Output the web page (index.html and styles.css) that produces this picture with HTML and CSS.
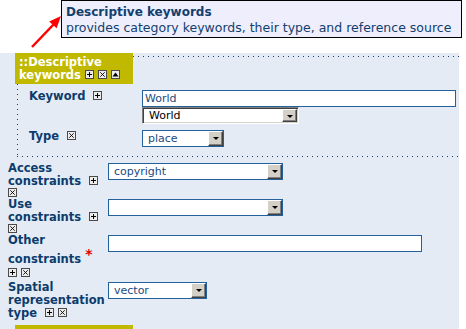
FILE: index.html
```html
<!DOCTYPE html>
<html lang="en">
<head>
    <meta charset="UTF-8">
    <meta name="viewport" content="width=device-width, initial-scale=1.0">
    <title>Metadata editor</title>
    <link rel="stylesheet" href="styles.css">
</head>
<body>
    <svg class="defs" width="0" height="0">
        <symbol id="i-add" viewBox="0 0 9 9">
            <rect x="0.5" y="0.5" width="8" height="8" fill="#ececec" stroke="#4a4a4a"/>
            <path d="M2 4.5h5M4.5 2v5" stroke="#000" stroke-width="1"/>
        </symbol>
        <symbol id="i-del" viewBox="0 0 9 9">
            <rect x="0.5" y="0.5" width="8" height="8" fill="#ececec" stroke="#4a4a4a"/>
            <path d="M2.3 2.3l4.4 4.4M6.7 2.3l-4.4 4.4" stroke="#000" stroke-width="0.9"/>
        </symbol>
        <symbol id="i-up" viewBox="0 0 9 9">
            <rect x="0.5" y="0.5" width="8" height="8" fill="#ececec" stroke="#4a4a4a"/>
            <path d="M1.5 6.5h6L4.5 2.5z" fill="#000"/>
        </symbol>
    </svg>

    <div class="tip">
        <div class="tip-title">Descriptive keywords</div>
        <div class="tip-text">provides category keywords, their type, and reference source</div>
    </div>
    <svg class="arrow" width="36" height="40" viewBox="0 0 36 40">
        <path d="M4 35L25.5 12.5" stroke="#f00" stroke-width="2.5"/>
        <path d="M33 4L28.6 16.3L21.2 9.5z" fill="#f00"/>
    </svg>

    <div class="panel">
        <div class="sect">
            <div class="sect-head">
                <div class="legend">::Descriptive keywords<svg class="ico"><use href="#i-add"/></svg><svg class="ico"><use href="#i-del"/></svg><svg class="ico"><use href="#i-up"/></svg></div>
                <div class="rule"></div>
            </div>
            <div class="sect-body">
                <div class="row">
                    <div class="lbl">Keyword <svg class="ico"><use href="#i-add"/></svg></div>
                    <div class="fld stack">
                        <input class="input w-keyword" type="text" value="World">
                        <div class="combo sunken w-world"><span>World</span><b class="drop"></b></div>
                    </div>
                </div>
                <div class="row">
                    <div class="lbl">Type <svg class="ico"><use href="#i-del"/></svg></div>
                    <div class="fld">
                        <div class="combo w-type"><span>place</span><b class="drop"></b></div>
                    </div>
                </div>
            </div>
        </div>

        <div class="list">
            <div class="row">
                <div class="lbl">Access constraints <svg class="ico"><use href="#i-add"/></svg><div class="btns"><svg class="ico"><use href="#i-del"/></svg></div></div>
                <div class="fld">
                    <div class="combo w-cons"><span>copyright</span><b class="drop"></b></div>
                </div>
            </div>
            <div class="row">
                <div class="lbl">Use constraints <svg class="ico"><use href="#i-add"/></svg><div class="btns"><svg class="ico"><use href="#i-del"/></svg></div></div>
                <div class="fld">
                    <div class="combo w-cons"><span></span><b class="drop"></b></div>
                </div>
            </div>
            <div class="row required">
                <div class="lbl">Other constraints <span class="req">*</span><div class="btns"><svg class="ico"><use href="#i-add"/></svg><svg class="ico"><use href="#i-del"/></svg></div></div>
                <div class="fld">
                    <input class="input w-other" type="text" value="">
                </div>
            </div>
            <div class="row">
                <div class="lbl">Spatial representation type <svg class="ico"><use href="#i-add"/></svg><svg class="ico"><use href="#i-del"/></svg></div>
                <div class="fld">
                    <div class="combo w-vector"><span>vector</span><b class="drop"></b></div>
                </div>
            </div>
        </div>

        <div class="legend next"></div>
    </div>
</body>
</html>
```

FILE: styles.css
```css
body {
    margin: 0;
    background-color: #fff;
    color: #0c3c6c;
    font-family: "DejaVu Sans", Verdana, sans-serif;
    font-size: 11.5px;
    line-height: 13px;
}

.defs {
    position: absolute;
}

/* tooltip over the form */
.tip {
    position: absolute;
    top: 0;
    left: 61px;
    width: 391px;
    padding: 4px 4px 2px 4px;
    border: 1px solid #000;
    background-color: #eeeefc;
    color: #12406e;
    font-size: 12px;
    line-height: 15px;
}

.tip-title {
    font-weight: bold;
}

.tip-text {
    font-size: 12.5px;
}

.arrow {
    position: absolute;
    top: 12px;
    left: 28px;
}

.panel {
    margin-top: 53px;
    width: 459px;
    min-height: 276px;
    background-color: #e4ebf5;
}

.sect-head {
    display: flex;
}

.legend {
    margin-left: 15px;
    width: 111px;
    padding: 3px 3px 2px 4px;
    background-color: #c0b900;
    color: #fff;
    font-weight: bold;
}

.legend .ico {
    margin-left: 4px;
}

.rule {
    flex: 1;
    height: 1px;
    margin-top: 3px;
    background: linear-gradient(to right, #1c3d66 1px, transparent 1px) 0 0 / 5px 1px repeat-x;
}

.sect-body {
    display: flex;
    flex-direction: column;
    gap: 6px;
    margin-left: 17px;
    padding: 6px 0 10px 12px;
    background:
        linear-gradient(to bottom, #1c3d66 1px, transparent 1px) 0 0 / 1px 5px repeat-y,
        linear-gradient(to right, #1c3d66 1px, transparent 1px) 0 100% / 5px 1px repeat-x;
}

.row {
    display: grid;
    grid-template-columns: 113px auto;
    align-items: start;
}

.lbl {
    font-weight: bold;
}

.ico {
    width: 9px;
    height: 9px;
    margin-left: 4px;
}

.btns {
    display: flex;
    gap: 4px;
}

.btns .ico {
    margin-left: 0;
}

.req {
    color: #e00000;
    font-size: 14px;
    line-height: 14px;
    vertical-align: 4px;
}

.required .btns {
    margin: 2px 0 3px;
}

.stack {
    display: flex;
    flex-direction: column;
}

.list {
    display: flex;
    flex-direction: column;
    gap: 1px;
    padding: 5px 0 5px 8px;
}

.list .row {
    grid-template-columns: 96px auto;
    column-gap: 4px;
}

.list .fld {
    margin-top: 1px;
}

.input {
    box-sizing: border-box;
    height: 17px;
    margin: 0;
    padding: 0 2px;
    border: 1px solid #22619b;
    background-color: #fff;
    color: #1a4a80;
    font-family: "DejaVu Sans", Verdana, sans-serif;
    font-size: 11px;
    outline: none;
}

.combo {
    display: flex;
    box-sizing: border-box;
    height: 17px;
    border: 1px solid #22619b;
    background-color: #fff;
    color: #1a4a80;
    font-size: 11px;
    font-weight: normal;
    line-height: 15px;
}

.combo span {
    flex: 1;
    padding-left: 5px;
}

.drop {
    position: relative;
    box-sizing: border-box;
    width: 15px;
    height: 15px;
    border: 1px solid;
    border-color: #fff #404040 #404040 #fff;
    background-color: #d4d0c8;
    box-shadow: inset -1px -1px #808080;
}

.drop::after {
    content: "";
    position: absolute;
    top: 5px;
    left: 4px;
    border: 3px solid transparent;
    border-top-color: #000;
    border-bottom: 0;
}

.combo.sunken {
    border-color: #808080 #fff #fff #808080;
    box-shadow: inset 1px 1px #404040, inset -1px -1px #d4d0c8;
    color: #000;
}

.combo.sunken span {
    padding-left: 6px;
    line-height: 14px;
    padding-top: 1px;
}

.combo.sunken .drop {
    height: 13px;
    margin: 1px 1px 0 0;
}

.w-keyword { width: 314px; }
.w-world { width: 157px; }
.w-type { width: 82px; }
.w-cons { width: 175px; }
.w-other { width: 314px; }
.w-vector { width: 99px; }

.legend.next {
    height: 10px;
    padding: 0;
    width: 118px;
}
```
